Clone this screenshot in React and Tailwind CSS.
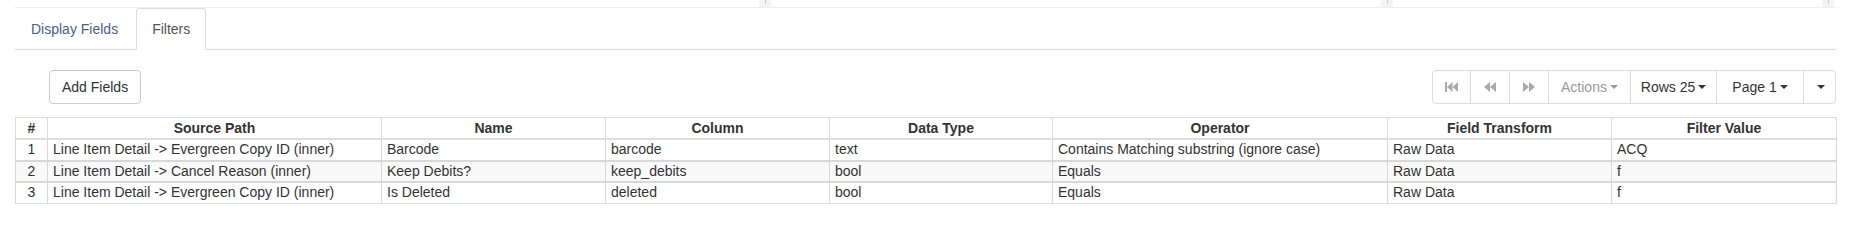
import React from 'react';

const rows = [
  ['1', 'Line Item Detail -> Evergreen Copy ID (inner)', 'Barcode', 'barcode', 'text', 'Contains Matching substring (ignore case)', 'Raw Data', 'ACQ'],
  ['2', 'Line Item Detail -> Cancel Reason (inner)', 'Keep Debits?', 'keep_debits', 'bool', 'Equals', 'Raw Data', 'f'],
  ['3', 'Line Item Detail -> Evergreen Copy ID (inner)', 'Is Deleted', 'deleted', 'bool', 'Equals', 'Raw Data', 'f'],
];

const headers = ['#', 'Source Path', 'Name', 'Column', 'Data Type', 'Operator', 'Field Transform', 'Filter Value'];
const widths = [32, 334, 224, 224, 223, 335, 224, 225];

function Caret() {
  return <span className="ml-[3px] inline-block h-0 w-0 border-x-[4px] border-t-[4px] border-x-transparent border-t-current align-middle" />;
}

function Handle() {
  return (
    <div className="flex h-[7px] w-[12px] items-start justify-center bg-[#f4f4f4]">
      <div className="h-[4px] w-[1px] bg-[#ccc]" />
    </div>
  );
}

function FastBackward() {
  return (
    <svg width="13" height="10" viewBox="0 0 13 10" fill="currentColor">
      <rect x="0" y="0" width="2" height="10" />
      <path d="M2 5 L7.5 0 V10 Z" />
      <path d="M7.5 5 L13 0 V10 Z" />
    </svg>
  );
}

function Backward() {
  return (
    <svg width="12" height="10" viewBox="0 0 12 10" fill="currentColor">
      <path d="M0 5 L6 0 V10 Z" />
      <path d="M6 5 L12 0 V10 Z" />
    </svg>
  );
}

function Forward() {
  return (
    <svg width="12" height="10" viewBox="0 0 12 10" fill="currentColor">
      <path d="M12 5 L6 0 V10 Z" />
      <path d="M6 5 L0 0 V10 Z" />
    </svg>
  );
}

export default function App() {
  return (
    <div className="h-[244px] w-[1857px] bg-white pl-[15px] pr-[21px] font-['Liberation_Sans',Arial,sans-serif] text-[14px] leading-[20px] text-[#333]">
      {/* top strip with pane handles */}
      <div className="flex h-[8px] border-b border-[#eee]">
        <div className="w-[744px]" />
        <Handle />
        <div className="w-[610px]" />
        <Handle />
        <div className="w-[429px]" />
        <Handle />
      </div>

      {/* Tabs */}
      <ul className="flex border-b border-[#ddd]">
        <li className="-mb-px">
          <a className="mr-[2px] block rounded-t-[4px] border border-transparent px-[15px] py-[10px] text-[#4f5c88]">Display Fields</a>
        </li>
        <li className="-mb-px">
          <a className="mr-[2px] block rounded-t-[4px] border border-[#ddd] border-b-transparent bg-white px-[15px] py-[10px] text-[#555]">Filters</a>
        </li>
      </ul>

      {/* Toolbar */}
      <div className="mt-[20px] flex items-center justify-between">
        <button className="ml-[34px] h-[34px] rounded-[4px] border border-[#ccc] bg-white px-[12px] text-[#333]">Add Fields</button>
        <div className="flex h-[34px]">
          <div className="flex w-[39px] items-center justify-center rounded-l-[4px] border border-[#ddd] text-[#aaa]">
            <FastBackward />
          </div>
          <div className="-ml-px flex w-[40px] items-center justify-center border border-[#ddd] text-[#aaa]">
            <Backward />
          </div>
          <div className="-ml-px flex w-[40px] items-center justify-center border border-[#ddd] text-[#aaa]">
            <Forward />
          </div>
          <div className="-ml-px flex w-[83px] items-center justify-center border border-[#ddd] text-[#999]">
            Actions<Caret />
          </div>
          <div className="-ml-px flex w-[87px] items-center justify-center border border-[#ddd] text-[#333]">
            Rows 25<Caret />
          </div>
          <div className="-ml-px flex w-[88px] items-center justify-center border border-[#ddd] text-[#333]">
            Page 1<Caret />
          </div>
          <div className="-ml-px flex w-[33px] items-center justify-center rounded-r-[4px] border border-[#ddd] text-[#333]">
            <Caret />
          </div>
        </div>
      </div>

      {/* Table */}
      <table className="mt-[13px] w-[1821px] table-fixed border-collapse border border-[#ddd]">
        <colgroup>
          {widths.map((w, i) => (
            <col key={i} style={{ width: w }} />
          ))}
        </colgroup>
        <thead>
          <tr>
            {headers.map((h) => (
              <th key={h} className="border-x border-b-2 border-[#ddd] px-[5px] py-0 text-center font-bold leading-[20px]">
                {h}
              </th>
            ))}
          </tr>
        </thead>
        <tbody>
          {rows.map((r, ri) => (
            <tr key={ri} className={ri === 1 ? 'bg-[#f9f9f9]' : 'bg-white'}>
              {r.map((c, ci) => (
                <td
                  key={ci}
                  className={`border-x border-t-2 border-[#d8d8d8] px-[5px] py-0 leading-[19.5px] whitespace-nowrap ${ci === 0 ? 'text-center' : 'text-left'}`}
                >
                  {c}
                </td>
              ))}
            </tr>
          ))}
        </tbody>
      </table>
    </div>
  );
}
